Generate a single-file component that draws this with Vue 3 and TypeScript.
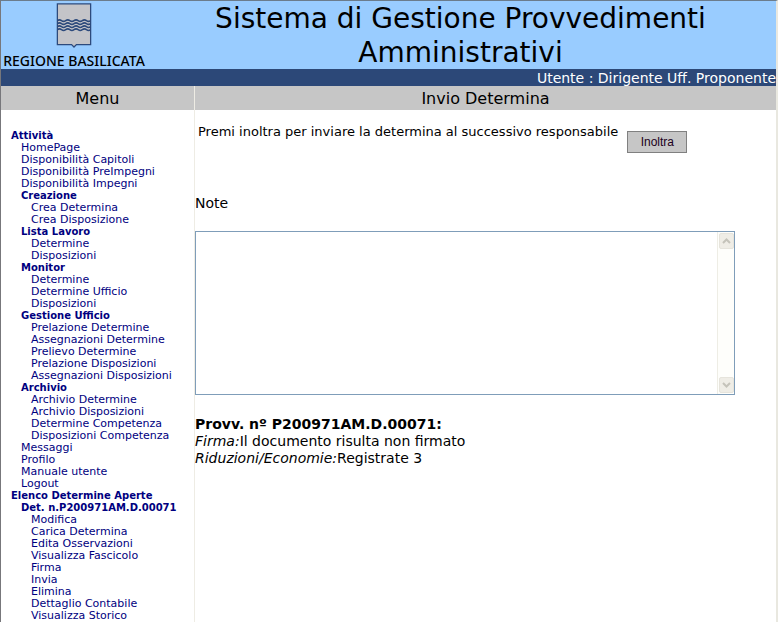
<script setup lang="ts">
import { ref } from 'vue'

interface MenuEntry {
  label: string
  level: 1 | 2 | 3
  heading?: boolean
}

const entries: MenuEntry[] = [
  { label: 'Attività', level: 1, heading: true },
  { label: 'HomePage', level: 2 },
  { label: 'Disponibilità Capitoli', level: 2 },
  { label: 'Disponibilità PreImpegni', level: 2 },
  { label: 'Disponibilità Impegni', level: 2 },
  { label: 'Creazione', level: 2, heading: true },
  { label: 'Crea Determina', level: 3 },
  { label: 'Crea Disposizione', level: 3 },
  { label: 'Lista Lavoro', level: 2, heading: true },
  { label: 'Determine', level: 3 },
  { label: 'Disposizioni', level: 3 },
  { label: 'Monitor', level: 2, heading: true },
  { label: 'Determine', level: 3 },
  { label: 'Determine Ufficio', level: 3 },
  { label: 'Disposizioni', level: 3 },
  { label: 'Gestione Ufficio', level: 2, heading: true },
  { label: 'Prelazione Determine', level: 3 },
  { label: 'Assegnazioni Determine', level: 3 },
  { label: 'Prelievo Determine', level: 3 },
  { label: 'Prelazione Disposizioni', level: 3 },
  { label: 'Assegnazioni Disposizioni', level: 3 },
  { label: 'Archivio', level: 2, heading: true },
  { label: 'Archivio Determine', level: 3 },
  { label: 'Archivio Disposizioni', level: 3 },
  { label: 'Determine Competenza', level: 3 },
  { label: 'Disposizioni Competenza', level: 3 },
  { label: 'Messaggi', level: 2 },
  { label: 'Profilo', level: 2 },
  { label: 'Manuale utente', level: 2 },
  { label: 'Logout', level: 2 },
  { label: 'Elenco Determine Aperte', level: 1, heading: true },
  { label: 'Det. n.P200971AM.D.00071', level: 2, heading: true },
  { label: 'Modifica', level: 3 },
  { label: 'Carica Determina', level: 3 },
  { label: 'Edita Osservazioni', level: 3 },
  { label: 'Visualizza Fascicolo', level: 3 },
  { label: 'Firma', level: 3 },
  { label: 'Invia', level: 3 },
  { label: 'Elimina', level: 3 },
  { label: 'Dettaglio Contabile', level: 3 },
  { label: 'Visualizza Storico', level: 3 },
]

const note = ref('')
const noteField = ref<HTMLTextAreaElement | null>(null)

function scrollNote(amount: number) {
  noteField.value?.scrollBy({ top: amount })
}
</script>

<template>
  <div class="page">
    <header class="banner">
      <div class="brand">
        <svg class="crest" viewBox="0 0 36 46" aria-hidden="true">
          <path d="M1 1H35V42.500H20.500L18 45L15.500 42.500H1Z" fill="#c4c4c8" stroke="#2d4a7c" stroke-width="1.300" />
          <g fill="none" stroke="#2d4a7c" stroke-width="1.600">
            <path d="M1 18q2.125-1.600 4.250 0t4.250 0 4.250 0 4.250 0 4.250 0 4.250 0 4.250 0 4.250 0" />
            <path d="M1 21.100q2.125-1.600 4.250 0t4.250 0 4.250 0 4.250 0 4.250 0 4.250 0 4.250 0 4.250 0" />
            <path d="M1 24.200q2.125-1.600 4.250 0t4.250 0 4.250 0 4.250 0 4.250 0 4.250 0 4.250 0 4.250 0" />
            <path d="M1 27.300q2.125-1.600 4.250 0t4.250 0 4.250 0 4.250 0 4.250 0 4.250 0 4.250 0 4.250 0" />
          </g>
        </svg>
        <span class="region">REGIONE BASILICATA</span>
      </div>
      <h1 class="title">Sistema di Gestione Provvedimenti Amministrativi</h1>
    </header>

    <div class="user">Utente : Dirigente Uff. Proponente</div>

    <div class="columns">
      <div class="side">
        <h2 class="bar">Menu</h2>
        <nav aria-label="Menu">
          <ul class="menu">
            <li v-for="(entry, i) in entries" :key="i" :class="'level-' + entry.level">
              <a href="#" :class="{ heading: entry.heading }" @click.prevent>{{ entry.label }}</a>
            </li>
          </ul>
        </nav>
      </div>

      <main class="main">
        <h2 class="bar">Invio Determina</h2>
        <form class="content" @submit.prevent>
          <div class="send">
            <p class="prompt">Premi inoltra per inviare la determina al successivo responsabile</p>
            <button class="submit" type="submit">Inoltra</button>
          </div>
          <label class="note-label" for="note">Note</label>
          <div class="note-box">
            <textarea id="note" ref="noteField" v-model="note" class="note" rows="9"></textarea>
            <div class="scroll">
              <button type="button" class="arrow" aria-label="Scorri su" @click="scrollNote(-16)">
                <svg viewBox="0 0 9 6" aria-hidden="true"><path d="M1 5L4.500 1.500L8 5" /></svg>
              </button>
              <button type="button" class="arrow" aria-label="Scorri giù" @click="scrollNote(16)">
                <svg viewBox="0 0 9 6" aria-hidden="true"><path d="M1 1L4.500 4.500L8 1" /></svg>
              </button>
            </div>
          </div>
          <div class="status">
            <strong>Provv. nº P200971AM.D.00071:</strong>
            <div><em>Firma:</em>Il documento risulta non firmato</div>
            <div><em>Riduzioni/Economie:</em>Registrate 3</div>
          </div>
        </form>
      </main>
    </div>
  </div>
</template>

<style>
body {
  background: #fff;
}
html {
  overflow: hidden;
}
</style>

<style scoped>
.page {
  box-sizing: border-box;
  display: flex;
  flex-direction: column;
  height: 100vh;
  margin-right: 4px;
  overflow: hidden;
  border-top: 1px solid #6b7c8c;
  border-left: 1px solid #77777b;
  border-right: 2px solid #e9e8e0;
  font-family: Verdana, "DejaVu Sans", sans-serif;
  font-size: 14px;
  line-height: 17px;
  color: #000;
}
.banner {
  display: flex;
  flex: none;
  height: 68px;
  background: #99ccff;
}
.brand {
  display: flex;
  flex-direction: column;
  align-items: center;
  box-sizing: border-box;
  width: 146px;
  padding-top: 2px;
}
.crest {
  display: block;
  width: 36px;
  height: 46px;
}
.region {
  margin-top: 5px;
  font-family: "Noto Sans", sans-serif;
  font-size: 14px;
  font-weight: 500;
  line-height: 16px;
  white-space: nowrap;
}
.title {
  flex: 1;
  margin: 0;
  padding: 1px 2px 0 0;
  font-size: 28px;
  font-weight: 400;
  line-height: 34px;
  text-align: center;
}
.user {
  flex: none;
  padding-top: 1px;
  background: #2c4878;
  color: #fff;
  line-height: 16px;
  text-align: right;
}
.columns {
  display: grid;
  grid-template-columns: 193px 1fr;
  flex: 1;
  min-height: 0;
}
.main {
  border-left: 1px solid #eeece4;
}
.bar {
  margin: 0;
  padding-top: 2px;
  background: #c6c6c6;
  font-size: 16px;
  font-weight: 400;
  line-height: 22px;
  text-align: center;
}
.menu {
  margin: 0;
  padding: 20px 0 0 10px;
  list-style: none;
  font-size: 11px;
  line-height: 12px;
  white-space: nowrap;
}
.menu li {
  height: 12px;
}
.menu a {
  display: block;
  color: #000080;
  text-decoration: none;
}
.menu .heading {
  font-size: 10px;
  font-weight: 700;
}
.level-2 {
  padding-left: 10px;
}
.level-3 {
  padding-left: 20px;
}
.send {
  display: flex;
  align-items: flex-start;
  gap: 9px;
  padding: 13px 3px 0;
}
.prompt {
  margin: 0;
  font-size: 13px;
}
.submit {
  width: 60px;
  height: 22px;
  margin-top: 8px;
  padding: 0;
  border: 1px solid #808080;
  background: #c6c6c6;
  font-family: "Liberation Sans", sans-serif;
  font-size: 12px;
  color: #200020;
}
.note-label {
  display: block;
  margin-top: 42px;
}
.note-box {
  display: flex;
  box-sizing: border-box;
  width: 93%;
  height: 164px;
  margin-top: 19px;
  border: 1px solid #7f9db9;
}
.note {
  flex: 1;
  padding: 2px;
  border: 0;
  outline: 0;
  resize: none;
  overflow: hidden;
  font: inherit;
}
.scroll {
  display: flex;
  flex-direction: column;
  justify-content: space-between;
  box-sizing: border-box;
  width: 17px;
  padding: 1px;
  border-left: 1px solid #eeede5;
  background: #fefefb;
}
.arrow {
  display: grid;
  place-items: center;
  width: 15px;
  height: 16px;
  padding: 0;
  border: 1px solid #e6e4dc;
  border-radius: 2px;
  background: #efede6;
}
.arrow svg {
  width: 9px;
  height: 6px;
  fill: none;
  stroke: #c5c3ba;
  stroke-width: 2;
}
.status {
  margin-top: 21px;
}
</style>
